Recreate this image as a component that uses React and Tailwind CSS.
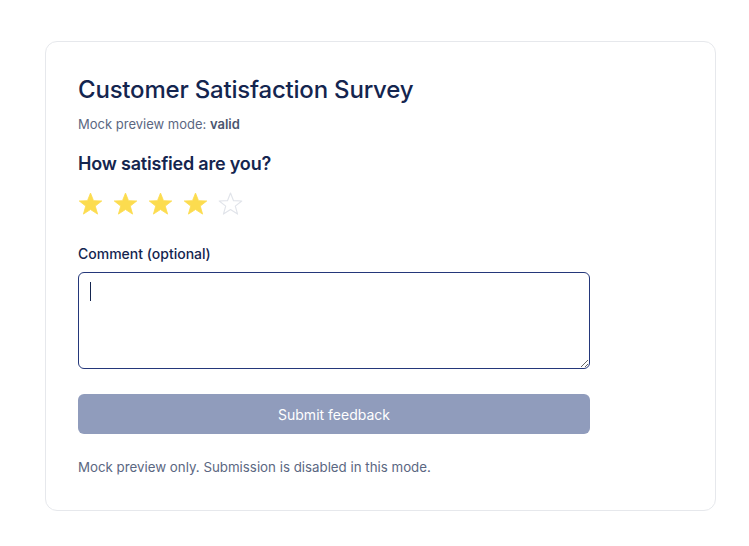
import { useState } from 'react'

const NAVY = 'text-[#14254f]'

function Star({ filled }) {
  return (
    <svg width="25" height="24" viewBox="0 0 24 23" aria-hidden="true">
      <polygon
        points="12,1 14.9,8.3 22.8,8.6 16.6,13.5 18.8,21.2 12,16.8 5.2,21.2 7.4,13.5 1.2,8.6 9.1,8.3"
        fill={filled ? '#fcdc4f' : 'none'}
        stroke={filled ? '#fcdc4f' : '#e1e4ea'}
        strokeWidth={filled ? 0.8 : 1.1}
        strokeLinejoin="round"
      />
    </svg>
  )
}

export default function App() {
  const [rating, setRating] = useState(4)
  const [comment, setComment] = useState('')

  return (
    <div className="min-h-screen bg-white font-['Inter','Liberation_Sans',sans-serif]">
      <div className="ml-[45px] pt-[41px]">
        <div className="w-[671px] h-[470px] rounded-xl border border-[#e6e8ec] bg-white p-8">
          <h1 className={`text-[24px] leading-8 font-medium tracking-[-0.2px] ${NAVY}`}>
            Customer Satisfaction Survey
          </h1>
          <p className="mt-2 text-[13px] leading-5 text-[#5b6782]">
            Mock preview mode: <span className="font-semibold text-[#4a5670]">valid</span>
          </p>

          <h2 className={`mt-4 text-[18px] leading-7 font-semibold tracking-[-0.2px] ${NAVY}`}>How satisfied are you?</h2>
          <div className="mt-[12px] flex h-7 items-center">
            {[1, 2, 3, 4, 5].map((n) => (
              <button
                key={n}
                type="button"
                onClick={() => setRating(n)}
                aria-label={`${n} star${n > 1 ? 's' : ''}`}
                className="mr-[10px] flex h-7 w-[25px] items-center justify-center"
              >
                <Star filled={n <= rating} />
              </button>
            ))}
          </div>

          <div className="w-[512px]">
            <label className={`mt-[26px] block text-[14px] leading-5 font-medium ${NAVY}`}>Comment (optional)</label>
            <div className="relative mt-2">
              <textarea
                value={comment}
                onChange={(e) => setComment(e.target.value)}
                className="block h-[97px] w-full rounded-md border border-[#24377a] px-3 py-2 text-[14px] text-[#14254f] outline-none"
              />
              {comment === '' && (
                <div className="pointer-events-none absolute left-[12px] top-[10px] h-[19px] w-px bg-[#14254f]" />
              )}
            </div>
            <button
              type="button"
              disabled
              className="mt-[25px] flex h-10 w-full items-center justify-center rounded-md bg-[#909cbc] text-[14px] font-normal text-white"
            >
              Submit feedback
            </button>
            <p className="mt-[23px] text-[13.3px] leading-5 text-[#5b6782]">
              Mock preview only. Submission is disabled in this mode.
            </p>
          </div>
        </div>
      </div>
    </div>
  )
}
